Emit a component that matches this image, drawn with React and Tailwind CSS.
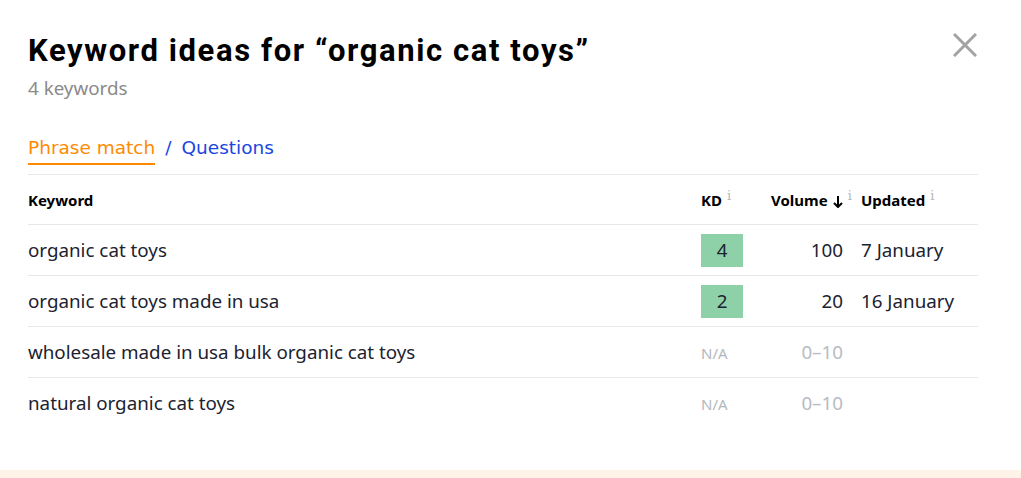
const ROWS = [
  { keyword: "organic cat toys", kd: 4, volume: "100", updated: "7 January" },
  { keyword: "organic cat toys made in usa", kd: 2, volume: "20", updated: "16 January" },
  { keyword: "wholesale made in usa bulk organic cat toys", kd: null, volume: "0–10", updated: "" },
  { keyword: "natural organic cat toys", kd: null, volume: "0–10", updated: "" },
];

const GRID = "grid grid-cols-[673px_70px_72px_1fr] items-center";

function Info() {
  return (
    <span className="shrink-0 ml-[5px] -mt-[3px] text-[13px] leading-[18px] font-normal text-[#b5b5b5] font-['DejaVu_Serif',serif]">
      i
    </span>
  );
}

export default function App() {
  return (
    <div className="w-[1021px] h-[478px] bg-white flex flex-col font-['Noto_Sans',sans-serif]">
      <main className="flex-1 pl-[28px] pr-[43px] pt-[32px]">
        <header className="flex items-start justify-between">
          <div>
            <h1 className="text-[31px] leading-[38px] font-bold tracking-[1.6px] text-black font-['Roboto',sans-serif]">
              Keyword ideas for “organic cat toys”
            </h1>
            <p className="mt-[6px] text-[18.8px] leading-[24px] text-[#8a8a8a]">4 keywords</p>
          </div>
          <button type="button" aria-label="Close" className="mt-[1px] mr-[1px]">
            <svg width="24" height="24" viewBox="0 0 24 24" stroke="#a3a3a3" strokeWidth="3" fill="none">
              <path d="M1 1 L23 23 M23 1 L1 23" />
            </svg>
          </button>
        </header>

        <nav className="mt-[36px] flex items-start gap-[10px] text-[18.5px] leading-[24px] font-['DejaVu_Sans',sans-serif]">
          <span className="text-[#ff8a00] border-b-2 border-[#ff8a00] pb-[3px]">Phrase match</span>
          <span className="text-[#1a47e0]">/</span>
          <span className="text-[#1a47e0]">Questions</span>
        </nav>

        <div className="mt-[9px] border-t border-[#e8e8e8]">
          <div className={GRID + " h-[50px] text-[15px] leading-[20px] font-bold text-black border-b border-[#e8e8e8]"}>
            <div>Keyword</div>
            <div className="flex items-start">KD<Info /></div>
            <div className="flex items-start whitespace-nowrap">
              Volume
              <svg className="shrink-0 ml-[5px] mt-[6px]" width="10" height="12" viewBox="0 0 10 12" fill="none" stroke="black" strokeWidth="2">
                <path d="M5 0 V10 M1 7 L5 11 L9 7" />
              </svg>
              <Info />
            </div>
            <div className="pl-[18px] flex items-start">Updated<Info /></div>
          </div>

          {ROWS.map((r) => (
            <div key={r.keyword} className={GRID + " h-[51px] text-[18.8px] text-[#1b2230] border-b border-[#e8e8e8] last:border-b-0"}>
              <div>{r.keyword}</div>
              <div>
                {r.kd !== null ? (
                  <span className="flex items-center justify-center w-[42px] h-[33px] bg-[#8ed1a9]">{r.kd}</span>
                ) : (
                  <span className="text-[15px] text-[#b3b8bd]">N/A</span>
                )}
              </div>
              <div className={"text-right " + (r.kd === null ? "text-[#b8bcc2]" : "")}>{r.volume}</div>
              <div className="pl-[18px]">{r.updated}</div>
            </div>
          ))}
        </div>
      </main>
      <div className="h-[8px] bg-[#fef3e6]" />
    </div>
  );
}
